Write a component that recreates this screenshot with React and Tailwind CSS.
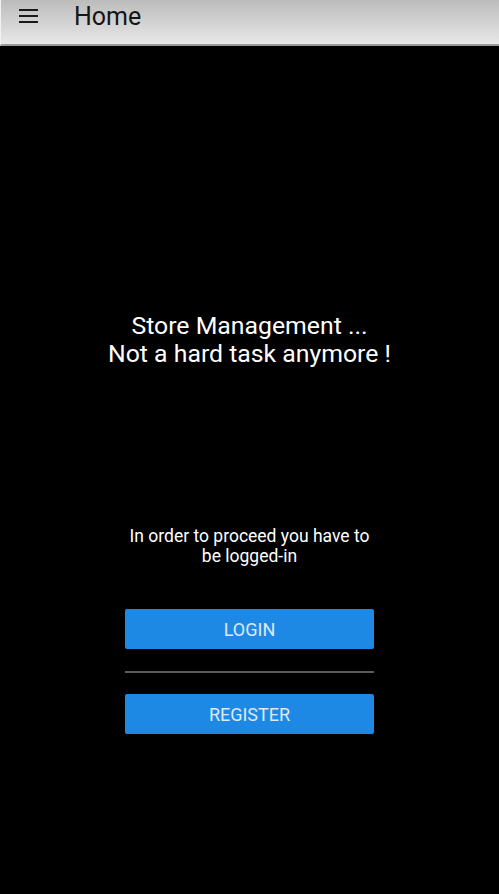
export default function App() {
  return (
    <div
      className="w-[499px] h-[894px] bg-black flex flex-col"
      style={{ fontFamily: "Roboto, 'Liberation Sans', sans-serif" }}
    >
      <div className="h-[46px] shrink-0 flex items-center bg-gradient-to-b from-[#bcbcbc] to-[#e8e8e8] border-b-2 border-[#9a9a9a] border-l border-l-[#f2f2f2]">
        <div className="ml-[18px] w-[19px] flex flex-col gap-[4px] -mt-[12px]">
          <span className="block h-[2px] bg-[#1a1a1a]" />
          <span className="block h-[2px] bg-[#1a1a1a]" />
          <span className="block h-[2px] bg-[#1a1a1a]" />
        </div>
        <span className="ml-[36px] -mt-[10px] text-[25px] leading-[30px] text-[#151515]">Home</span>
      </div>

      <div className="flex flex-col items-center">
        <div className="mt-[266px] text-center text-white text-[24.8px] leading-[28px]">
          <div>Store Management ...</div>
          <div>Not a hard task anymore !</div>
        </div>

        <div className="mt-[158px] text-center text-white text-[17.5px] leading-[20px]">
          <div>In order to proceed you have to</div>
          <div>be logged-in</div>
        </div>

        <div className="mt-[43px] w-[249px] flex flex-col">
          <button className="h-[40px] bg-[#1e88e5] rounded-[2px] text-[#dfe9f3] text-[18px]">
            LOGIN
          </button>
          <div className="mt-[22px] h-[2px] bg-[#5a5a5a]" />
          <button className="mt-[21px] h-[40px] bg-[#1e88e5] rounded-[2px] text-[#dfe9f3] text-[18px]">
            REGISTER
          </button>
        </div>
      </div>
    </div>
  );
}
